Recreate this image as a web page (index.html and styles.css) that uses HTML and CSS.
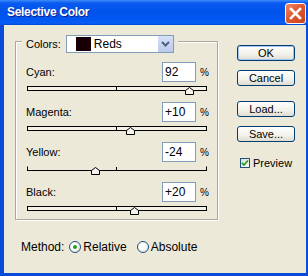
FILE: index.html
```html
<!DOCTYPE html>
<html>
<head>
<meta charset="utf-8">
<link rel="stylesheet" href="styles.css">
</head>
<body>
<div class="window">
  <div class="titlebar">
    <span class="title">Selective Color</span>
    <span class="close">
      <svg width="19" height="19" viewBox="0 0 19 19"><path d="M5 5 L14 14 M14 5 L5 14" stroke="#fff" stroke-width="2.6" stroke-linecap="square"/></svg>
    </span>
  </div>
  <div class="frame">
    <div class="left">
      <div class="group">
        <div class="legend">
          <span class="legend-label">Colors:</span>
          <div class="select">
            <span class="swatch"></span>
            <span class="select-text">Reds</span>
            <span class="select-btn">
              <svg width="9" height="6" viewBox="0 0 9 6"><path d="M1 1 L4.5 4.5 L8 1" fill="none" stroke="#4D6185" stroke-width="2"/></svg>
            </span>
          </div>
        </div>

        <div class="ctrl">
          <div class="ctrl-row">
            <span class="ctrl-label">Cyan:</span>
            <span class="num">92</span>
            <span class="pct">%</span>
          </div>
          <div class="track">
            <span class="tick"></span>
            <svg class="thumb" style="left:91%" width="9" height="8" viewBox="0 0 9 8"><path d="M0.5 7.5 V3.5 L4.5 0.5 L8.5 3.5 V7.5 Z" fill="#F4F3EE" stroke="#000"/></svg>
          </div>
        </div>

        <div class="ctrl">
          <div class="ctrl-row">
            <span class="ctrl-label">Magenta:</span>
            <span class="num">+10</span>
            <span class="pct">%</span>
          </div>
          <div class="track">
            <span class="tick"></span>
            <svg class="thumb" style="left:58%" width="9" height="8" viewBox="0 0 9 8"><path d="M0.5 7.5 V3.5 L4.5 0.5 L8.5 3.5 V7.5 Z" fill="#F4F3EE" stroke="#000"/></svg>
          </div>
        </div>

        <div class="ctrl">
          <div class="ctrl-row">
            <span class="ctrl-label">Yellow:</span>
            <span class="num">-24</span>
            <span class="pct">%</span>
          </div>
          <div class="track track-flat">
            <span class="tick"></span>
            <svg class="thumb" style="left:38%" width="9" height="8" viewBox="0 0 9 8"><path d="M0.5 7.5 V3.5 L4.5 0.5 L8.5 3.5 V7.5 Z" fill="#F4F3EE" stroke="#000"/></svg>
          </div>
        </div>

        <div class="ctrl">
          <div class="ctrl-row">
            <span class="ctrl-label">Black:</span>
            <span class="num">+20</span>
            <span class="pct">%</span>
          </div>
          <div class="track">
            <span class="tick"></span>
            <svg class="thumb" style="left:60%" width="9" height="8" viewBox="0 0 9 8"><path d="M0.5 7.5 V3.5 L4.5 0.5 L8.5 3.5 V7.5 Z" fill="#F4F3EE" stroke="#000"/></svg>
          </div>
        </div>
      </div>

      <div class="method">
        <span class="method-label">Method:</span>
        <span class="radio checked"><span class="dot"></span></span>
        <span class="radio-text">Relative</span>
        <span class="radio second"></span>
        <span class="radio-text">Absolute</span>
      </div>
    </div>

    <div class="buttons">
      <span class="btn default">OK</span>
      <span class="btn">Cancel</span>
      <span class="btn gap">Load...</span>
      <span class="btn">Save...</span>
      <div class="preview">
        <span class="check">
          <svg width="8" height="8" viewBox="0 0 8 8"><path d="M1 3.8 L3 6 L7 1.5" fill="none" stroke="#21A121" stroke-width="1.8"/></svg>
        </span>
        <span>Preview</span>
      </div>
    </div>
  </div>
</div>
</body>
</html>
```

FILE: styles.css
```css
* { box-sizing: border-box; }
html, body { margin: 0; padding: 0; }
body {
  width: 308px;
  height: 276px;
  overflow: hidden;
  font-family: "Liberation Sans", Arial, sans-serif;
  font-size: 11px;
  color: #000;
  background: #ECE9D8;
}
.window {
  width: 308px;
  height: 276px;
  display: flex;
  flex-direction: column;
  background: #0A48D8;
}
.titlebar {
  height: 25px;
  display: flex;
  align-items: flex-start;
  justify-content: space-between;
  padding: 0 2px 0 7px;
  background: linear-gradient(#3C8CF8 0px, #0A5AF0 3px, #0052EA 12px, #0257F2 20px, #0A5EF5 23px, #0047D8 25px);
}
.title {
  margin-top: 5px;
  color: #fff;
  font-weight: bold;
  font-size: 12px;
  letter-spacing: -0.3px;
  line-height: 15px;
  text-shadow: 1px 1px 0 #0A1E8C;
}
.close {
  margin-top: 3px;
  width: 21px;
  height: 21px;
  border: 1px solid #fff;
  border-radius: 3px;
  background: linear-gradient(135deg, #F08A68 0%, #E0582F 45%, #C9421F 100%);
  display: flex;
  align-items: center;
  justify-content: center;
}
.frame {
  flex: 1;
  display: flex;
  border-style: solid;
  border-color: #0A4BDC;
  border-width: 0 2px 3px 4px;
  background: #ECE9D8;
  padding: 16px 0 0 11px;
  box-shadow: 0 1px 0 #00209A;
}
.left { width: 203px; }
.group {
  border: 1px solid #ACA899;
  box-shadow: inset 1px 1px 0 #fff, 1px 1px 0 #fff;
  padding: 0 9px 8px 10px;
}
.legend {
  display: flex;
  align-items: center;
  width: fit-content;
  margin: -7px 0 0 -4px;
  padding: 0 4px;
  background: #ECE9D8;
  gap: 5px;
}
.legend-label { line-height: 13px; }
.select {
  width: 108px;
  height: 18px;
  border: 1px solid #7F9DB9;
  background: #fff;
  display: flex;
  align-items: center;
  padding: 0 0 0 9px;
}
.swatch {
  width: 15px;
  height: 14px;
  background: #160003;
}
.select-text {
  flex: 1;
  margin-left: 3px;
  font-size: 12px;
}
.select-btn {
  width: 15px;
  height: 16px;
  background: linear-gradient(#D6E1F7, #BCCBEA);
  display: flex;
  align-items: center;
  justify-content: center;
}
.ctrl { width: 182px; margin-top: 9px; }
.ctrl + .ctrl { margin-top: 11px; }
.ctrl-row {
  display: flex;
  align-items: center;
  height: 20px;
}
.ctrl-label { flex: 1; }
.num {
  width: 34px;
  height: 20px;
  border: 1px solid #7F9DB9;
  background: #fff;
  padding-left: 2px;
  line-height: 18px;
  font-size: 12px;
}
.pct {
  width: 8px;
  margin-left: 4px;
  font-size: 10px;
}
.track {
  position: relative;
  margin: 4px 0 0 1px;
  width: 180px;
  height: 5px;
  border: 1px solid #000;
  background: #F3F1E6;
}
.track-flat {
  border-top-color: transparent;
  background: transparent;
}
.tick {
  position: absolute;
  left: 88px;
  top: 0;
  width: 1px;
  height: 3px;
  background: #000;
}
.thumb {
  position: absolute;
  top: 0;
  margin-left: -5px;
}
.method {
  display: flex;
  align-items: center;
  height: 12px;
  margin: 21px 0 0 6px;
}
.method-label {
  white-space: nowrap;
  font-size: 12px;
}
.radio {
  width: 12px;
  height: 12px;
  border: 1px solid #1C5180;
  border-radius: 50%;
  background: radial-gradient(circle at 40% 40%, #fff 30%, #DCD9CE 100%);
  display: flex;
  align-items: center;
  justify-content: center;
  margin-left: 5px;
}
.radio.second { margin-left: 10px; }
.dot {
  width: 4px;
  height: 4px;
  border-radius: 50%;
  background: #21A121;
}
.radio-text {
  margin-left: 2px;
  font-size: 12px;
}
.buttons {
  margin: 4px 0 0 19px;
  width: 58px;
  display: flex;
  flex-direction: column;
}
.btn {
  height: 16px;
  border: 1px solid #003C74;
  border-radius: 3px;
  background: linear-gradient(#FFFFFF, #F2F1EA 60%, #DEDCD1);
  display: flex;
  align-items: center;
  justify-content: center;
  font-size: 11px;
  margin-bottom: 9px;
}
.btn.default {
  box-shadow: inset 0 0 0 1px #A8C4F0;
}
.btn.gap { margin-top: 6px; }
.preview {
  margin-top: 6px;
  display: flex;
  align-items: center;
  margin-left: 3px;
  gap: 3px;
}
.check {
  width: 10px;
  height: 10px;
  border: 1px solid #1C5180;
  background: linear-gradient(135deg, #DCDBD2, #fff);
  display: flex;
  align-items: center;
  justify-content: center;
}
```
